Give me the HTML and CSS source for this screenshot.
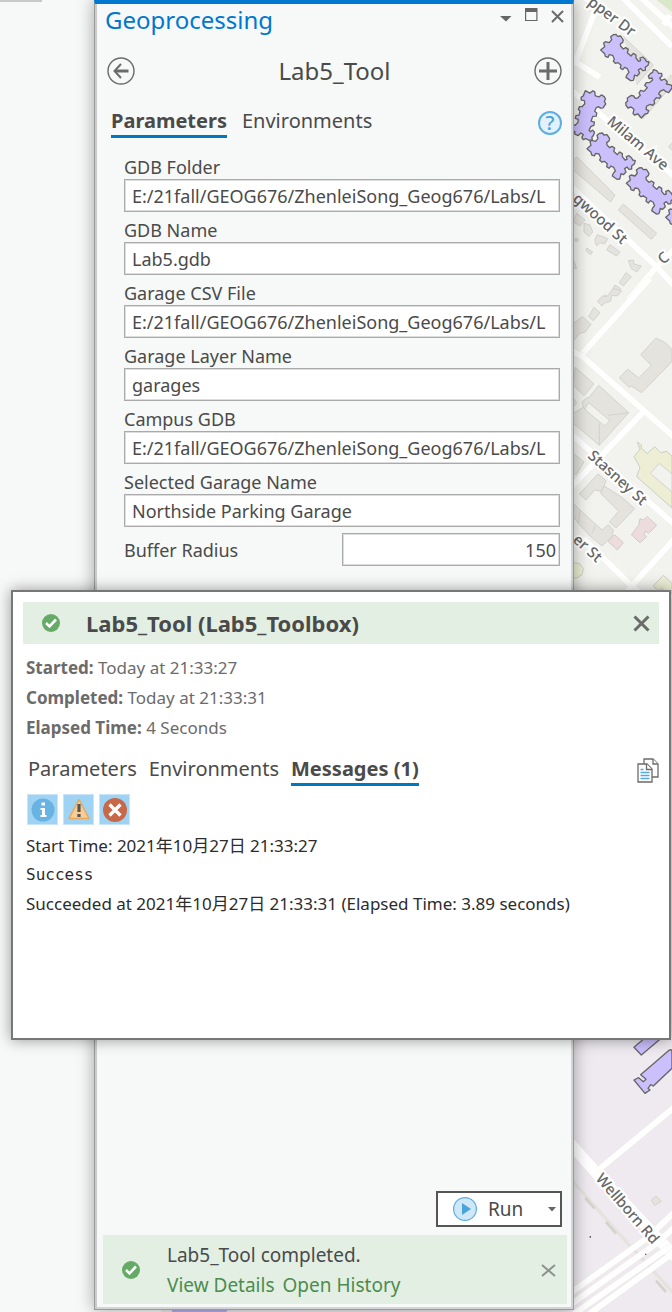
FILE: index.html
```html
<!DOCTYPE html>
<html lang="en">
<head>
<meta charset="utf-8">
<meta name="viewport" content="width=device-width, initial-scale=1">
<title>Geoprocessing</title>
<link rel="stylesheet" href="styles.css">
</head>
<body>
<div class="workspace">
  <svg class="map" viewBox="0 0 672 1312" preserveAspectRatio="xMinYMin slice" aria-label="Campus map">
    <defs>
      <path id="hall" d="M122 150L134 140 131 129 136 125 148 128 155 119 152 110 160 104 168 103 173 109 182 108 190 120 188 127 181 132 182 139 190 147 197 143 205 148 202 158 213 168 220 160 228 165 228 174 236 184 242 182 240 174 248 171 256 178 259 184 267 186 264 196 256 202 256 211 248 212 242 205 235 210 239 220 231 228 224 225 222 234 220 241 212 242 198 232 201 224 207 217 202 206 194 202 188 209 181 204 183 195 174 188 166 190 160 184 163 177 158 166 148 164 144 172 136 169 134 161Z"/>
    </defs>
    <rect class="land" width="672" height="1312"/>
    <g transform="translate(560 0) scale(.33333)">
      <path class="park" d="M290 0H336V36Z"/>
      <g class="roads"><path d="M185-10L336 140M240-10L350 90M330 45L310 75M45 190L110 20 60-20M40 182L120 232M-10 230L45 280 345 530M35 560L150 670 290 800 345 860M345 745L290 800 205 900"/></g>
      <path class="block" d="M190 110L280 195 230 255M330 225L350 240 250 355 235 350M40 480L50 470 165 585 152 606 40 510ZM190 612L290 700 274 718 175 630ZM336 430L325 440 336 450"/>
      <path class="block" d="M50 640L75 660 60 678 40 665ZM72 670L90 675 98 696 86 710 72 695ZM112 704L143 716 134 732 120 728 110 738 104 720ZM150 734L180 756 170 768 140 750ZM80 744L98 756 92 764 78 752ZM40 780L50 805H40ZM205 782L220 780 222 792 244 798 230 816 214 806ZM198 818L214 830 190 858 178 848ZM165 855L182 866 160 886 150 880ZM120 900L135 884 150 900ZM45 720a4 4 0 1 0 10 0a4 4 0 1 0-10 0"/>
      <g class="halls">
        <use href="#hall"/>
        <use href="#hall" transform="translate(73 111) rotate(-90 193 172)"/>
        <use href="#hall" transform="translate(-111 174) rotate(68 193 172)"/>
        <use href="#hall" transform="translate(-41 296)"/>
        <use href="#hall" transform="translate(77 400)"/>
        <use href="#hall" transform="translate(195 502)"/>
      </g>
    </g>
    <g transform="translate(560 290) scale(.33333)">
      <g class="roads"><path d="M270-35L68 190M30 180L68 200 350 448M30 430L180 560 345 705M248 368L35 590M70 745L215 888 345 745M215 888L190 920M215 888L250 920"/></g>
      <path class="block" d="M68 80L93 103 76 126 60 130 40 152V100ZM102 52L120 68 100 92 86 80ZM112 34L128 18 140 20 160-4 185 2 172 18 155 16 152 34 132 40 126 48ZM288 144L316 158 336 178V215L245 308 214 288 208 292 178 264 203 237 236 264 274 226 242 194ZM46 232L102 282 72 317 40 286ZM116 286L206 368 118 466 40 400V370L70 352 66 336 80 324 88 322ZM40 325L50 338 40 350ZM40 490L72 516 50 552H40Z"/>
      <path class="block" d="M114 552L138 572 132 588 122 604 104 600 78 630 58 612ZM132 588L186 622 224 656 168 714 148 696 176 664 122 610ZM40 640L60 660 126 720 145 704 160 720 156 740 126 768 90 738 55 700 40 680Z"/>
      <path class="court" d="M86 338L150 392 134 408 74 358Z"/>
      <path class="crease" d="M144 376L206 368M118 400V466M70 352L78 360M60 660L55 700M106 704L98 728"/>
      <path class="yellow" d="M232 456L245 466 243 474 262 490 284 470 302 488 320 484 336 498V654L230 560 240 532 222 500 240 478ZM40 818L58 820 70 836 66 854 50 864H40ZM310 856L336 880V910H322L305 894 296 904 280 888Z"/>
      <path class="court" d="M336 552L298 520 271 550 336 606Z"/>
      <path class="pink" d="M240 686L250 690 262 680 290 706 266 730 256 724 252 734 260 740 240 758 214 734 236 706ZM164 734L190 758 172 780 144 754Z"/>
    </g>
    <path class="campus" d="M0 1000H672V1312H0Z"/>
    <g transform="translate(560 1030) scale(.33333)">
      <g class="track"><path d="M35 450L190 625 350 800"/></g>
      <path class="ties" d="M76 504L104 536M138 576L168 610M288 752L318 786"/>
      <g class="roads wide"><path d="M30 340L110 430 345 680"/></g>
      <g class="roads"><path d="M345 230L115 420M30 790L260 625 345 545M30 825L290 640 345 590M30 860L330 650M90 850L345 665"/></g>
      <g class="halls"><path d="M222 52L250 28H300L244 75ZM336 60V115L280 168 272 164 264 175 270 180 255 190 222 150 236 143 250 155 258 148 242 134 328 60Z"/></g>
      <path class="block" d="M288 498L304 514 284 526 274 510Z"/>
      <path class="speck" d="M89 618H93V623H89ZM255 671H259V675H255Z"/>
    </g>
    <path class="hallstrip" d="M172 1309H229L226 1312H172Z"/>
    <path class="gutter" d="M0 0H95V1309H161V1312H0Z"/>
    <path class="edge" d="M0 1H42"/>
    <g class="street">
      <text transform="translate(587 4) rotate(37)">pper Dr</text>
      <text transform="translate(606 123) rotate(40)">Milam Ave</text>
      <text transform="translate(572 200) rotate(42)">gwood St</text>
      <text transform="translate(587 457) rotate(42)">Stasney St</text>
      <text transform="translate(572 541) rotate(42)">er St</text>
      <text transform="translate(595 1179) rotate(49)">Wellborn Rd</text>
      <text transform="translate(663 265) rotate(-40)">C</text>
    </g>
  </svg>

  <main class="pane">
    <header class="pane-bar">
      <h1>Geoprocessing</h1>
      <div class="window-tools">
        <button class="plain" aria-label="Options"><svg width="12" height="12" viewBox="0 0 12 12"><path class="solid" d="M0 5H11.500L6 10.500Z"/></svg></button>
        <button class="plain" aria-label="Maximize"><svg width="13" height="18" viewBox="0 0 13 18"><path class="solid" fill-rule="evenodd" d="M0 0H12.500V13H0ZM1.200 4V12H11.300V4Z"/></svg></button>
        <button class="plain" aria-label="Close pane"><svg width="13" height="13" viewBox="0 0 13 13"><path class="stroke" d="M1 1L12 12M12 1L1 12"/></svg></button>
      </div>
    </header>
    <div class="tool-head">
      <button class="plain" aria-label="Back"><svg width="28" height="28" viewBox="0 0 28 28"><circle class="ring" cx="14" cy="14" r="13"/><path class="thick" d="M21.500 14H8"/><path class="stroke" d="M14 7L7.500 14 14 21"/></svg></button>
      <h2>Lab5_Tool</h2>
      <button class="plain" aria-label="Add"><svg width="28" height="28" viewBox="0 0 28 28"><circle class="ring" cx="14" cy="14" r="13"/><path class="thick" d="M14 5V23M5 14H23"/></svg></button>
    </div>
    <div class="pane-tabs">
      <nav class="tabs">
        <button class="tab active">Parameters</button>
        <button class="tab">Environments</button>
      </nav>
      <button class="help" aria-label="Help">?</button>
    </div>
    <form class="fields">
      <div class="field"><label for="folder">GDB Folder</label><input id="folder" value="E:/21fall/GEOG676/ZhenleiSong_Geog676/Labs/L"></div>
      <div class="field"><label for="gdb">GDB Name</label><input id="gdb" value="Lab5.gdb"></div>
      <div class="field"><label for="csv">Garage CSV File</label><input id="csv" value="E:/21fall/GEOG676/ZhenleiSong_Geog676/Labs/L"></div>
      <div class="field"><label for="layer">Garage Layer Name</label><input id="layer" value="garages"></div>
      <div class="field"><label for="campus">Campus GDB</label><input id="campus" value="E:/21fall/GEOG676/ZhenleiSong_Geog676/Labs/L"></div>
      <div class="field"><label for="garage">Selected Garage Name</label><input id="garage" value="Northside Parking Garage"></div>
      <div class="field inline"><label for="radius">Buffer Radius</label><input id="radius" value="150"></div>
    </form>
    <div class="actions">
      <button class="run">
        <svg width="24" height="24" viewBox="0 0 24 24"><circle cx="12" cy="12" r="11.400" fill="#cfe7f7" stroke="#5eaee0" stroke-width="1.200"/><path d="M9 6V18L18 12Z" fill="#4ba3dc"/></svg>
        <span>Run</span>
        <svg class="caret" width="8" height="5" viewBox="0 0 8 5"><path class="solid" d="M0 0H8L4 4.500Z"/></svg>
      </button>
    </div>
    <footer class="status">
      <svg width="18" height="18" viewBox="0 0 18 18"><circle cx="9" cy="9" r="9" fill="#65aa66"/><path class="tick" d="M4 9L7.500 12.500 14 5.500"/></svg>
      <div class="status-text">
        <p>Lab5_Tool completed.</p>
        <p class="links"><a href="#details">View Details</a><a href="#history">Open History</a></p>
      </div>
      <button class="plain faint" aria-label="Dismiss"><svg width="15" height="13" viewBox="0 0 15 13"><path class="stroke" d="M1 1L14 12M14 1L1 12"/></svg></button>
    </footer>
  </main>

  <section class="popup" id="details">
    <header class="popup-head">
      <svg width="18" height="18" viewBox="0 0 18 18"><circle cx="9" cy="9" r="9" fill="#65aa66"/><path class="tick" d="M4 9L7.500 12.500 14 5.500"/></svg>
      <h2>Lab5_Tool (Lab5_Toolbox)</h2>
      <button class="plain" aria-label="Close"><svg width="17" height="17" viewBox="0 0 17 17"><path class="thick" d="M1.500 1.500L15.500 15.500M15.500 1.500L1.500 15.500"/></svg></button>
    </header>
    <div class="summary">
      <p><b>Started:</b> Today at 21:33:27</p>
      <p><b>Completed:</b> Today at 21:33:31</p>
      <p><b>Elapsed Time:</b> 4 Seconds</p>
    </div>
    <div class="popup-tabs">
      <nav class="tabs compact">
        <button class="tab">Parameters</button>
        <button class="tab">Environments</button>
        <button class="tab active">Messages (1)</button>
      </nav>
      <button class="plain" aria-label="Copy messages"><svg width="22" height="25" viewBox="0 0 22 25"><g fill="#fff" stroke="#6b6b6b" stroke-width="1.300"><path d="M7 1H16L21 6V19H7Z"/><path d="M16 1V6H21M1 6H10L15 11V24H1Z"/><path d="M9.500 6V11.500H15"/></g><path d="M3.500 11.500H6.500M3.500 14.500H12.500M3.500 17.500H12.500M3.500 20.500H12.500" stroke="#55a9dd" stroke-width="1.300"/></svg></button>
    </div>
    <div class="filters">
      <button class="filter" aria-label="Information"><svg width="24" height="24" viewBox="0 0 24 24"><circle cx="12" cy="12" r="11.500" fill="#69b3e3"/><path d="M10.500 4.500H14V7.500H10.500ZM9.500 10H14V17H15.500V19H9.500V17H11V12H9.500Z" fill="#fff"/></svg></button>
      <button class="filter" aria-label="Warnings"><svg width="24" height="24" viewBox="0 0 24 24"><path d="M12 1.500L22 20.500H2Z" fill="#f9cd94" stroke="#e5a95f" stroke-width="1.500" stroke-linejoin="round"/><path d="M10.400 6H13.600V14H10.400ZM10.400 16H13.600V19H10.400Z" fill="#555"/></svg></button>
      <button class="filter" aria-label="Errors"><svg width="24" height="24" viewBox="0 0 24 24"><circle cx="12" cy="12" r="12" fill="#c86848"/><path d="M6.500 6.500L17.500 17.500M17.500 6.500L6.500 17.500" stroke="#fff" stroke-width="3.200"/></svg></button>
    </div>
    <div class="log">
      <p>Start Time: 2021年10月27日 21:33:27</p>
      <p class="output">Success</p>
      <p>Succeeded at 2021年10月27日 21:33:31 (Elapsed Time: 3.89 seconds)</p>
    </div>
  </section>
</div>
</body>
</html>
```

FILE: styles.css
```css
* { box-sizing: border-box; }
body, h1, h2, p { margin: 0; }
body {
  font-family: "Noto Sans", "Noto Sans CJK SC", sans-serif;
  font-size: 18px;
  line-height: 24px;
  color: #4a4a4a;
  background: #f7f8f8;
}
button, input { font: inherit; color: inherit; }
button { padding: 0; border: 0; background: none; }
svg { display: block; flex: none; }
.workspace { position: relative; display: flex; min-height: 100vh; overflow: hidden; }
.solid { fill: #666; }
.stroke { fill: none; stroke: #6b6b6b; stroke-width: 2; }
.thick { fill: none; stroke: #6b6b6b; stroke-width: 3; }
.ring { fill: none; stroke: #6b6b6b; stroke-width: 1.4; }
.tick { fill: none; stroke: #fff; stroke-width: 2.6; }

/* Map backdrop */
.map { position: absolute; inset: 0; width: 100%; height: 100%; }
.land { fill: #f2f3ee; }
.park { fill: #d9e8c8; }
.campus { fill: #eeeaf0; }
.roads { fill: none; stroke: #fff; stroke-width: 18; filter: drop-shadow(0 0 1px #dfdfc8); }
.wide { stroke-width: 34; }
.block { fill: #e4e3dd; stroke: #d2d2cf; stroke-width: 3; }
.court { fill: #f2f3ee; stroke: #d2d2cf; stroke-width: 3; }
.crease { fill: none; stroke: #d2d2cf; stroke-width: 3; }
.yellow { fill: #edeed4; stroke: #cccdc5; stroke-width: 3; }
.pink { fill: #eddcde; stroke: #d3c9ca; stroke-width: 3; }
.halls { fill: #cbbffc; stroke: #666; stroke-width: 4; stroke-linejoin: round; }
.track { fill: none; stroke: #e4e3de; stroke-width: 10; }
.ties { fill: none; stroke: #d4d3ce; stroke-width: 8; }
.speck { fill: #555; }
.hallstrip { fill: #b9aeea; }
.gutter { fill: #f7f9f8; }
.edge { stroke: #c9c9c9; stroke-width: 2; }
.street text {
  font-family: "Noto Sans", sans-serif;
  font-size: 15px;
  font-weight: 500;
  fill: #666;
  stroke: #fff;
  stroke-width: 4px;
  paint-order: stroke;
}

/* Tool pane */
.pane {
  position: relative;
  display: flex;
  flex-direction: column;
  flex: 1;
  margin: 0 98px 2px 94px;
  padding: 0 6px 5px;
  border: 1px solid #999;
  border-top: 4px solid #0078d0;
  background: #f7f9f8;
  box-shadow: inset 2px 0 #ccc, inset -2px -2px #d2d4d5, 0 0 16px rgba(0, 0, 0, .35);
}
.pane-bar { display: flex; justify-content: space-between; padding: 0 3px 0 4px; height: 34px; }
.pane-bar h1 { font-size: 24px; font-weight: 400; line-height: 32px; color: #0078d0; }
.window-tools { display: flex; align-items: center; gap: 13px; height: 25px; }
.tool-head { display: flex; align-items: center; justify-content: space-between; height: 66px; padding: 0 5px 0 6px; }
.tool-head h2 { font-size: 24px; font-weight: 400; line-height: 30px; }
.pane-tabs { display: flex; align-items: center; justify-content: space-between; padding: 3px 5px 0 10px; }
.tabs { display: flex; gap: 15px; }
.compact { gap: 12px; }
.tab { border-bottom: 3px solid transparent; font-size: 20px; line-height: 28px; white-space: nowrap; }
.tab.active { border-bottom-color: #0078c0; font-weight: 700; }
.help { width: 24px; height: 24px; border: 2px solid #5eaee0; border-radius: 50%; background: #e2f1fb; color: #4ba3dc; font-size: 20px; font-weight: 500; line-height: 20px; }
.fields { display: flex; flex-direction: column; gap: 6px; padding: 17px 7px 0 23px; }
.field { display: flex; flex-direction: column; }
.field label { height: 24px; }
.field input {
  width: 100%;
  height: 33px;
  padding: 0 2px 0 7px;
  border: 1px solid #aaa;
  border-radius: 0;
  outline: 0;
  background: #fff;
  box-shadow: inset 0 0 0 1px #ddd;
}
.inline { flex-direction: row; justify-content: space-between; align-items: center; }
.inline input { width: 50%; padding-right: 3px; text-align: right; }
.actions { display: flex; justify-content: flex-end; margin-top: auto; padding: 0 5px 8px; }
.run { display: flex; align-items: center; gap: 11px; width: 126px; height: 36px; padding: 0 4px 0 15px; border: 2px solid #555; background: #fff; font-size: 19px; }
.caret { margin-left: auto; }
.status { display: flex; align-items: center; padding: 5px 11px 4px 19px; margin-left: 2px; background: #e3efe3; }
.status-text { flex: 1; padding-left: 27px; font-size: 19px; line-height: 30px; }
.links { display: flex; gap: 8px; }
.links a { color: #4c8c4e; text-decoration: none; }
.faint { opacity: .7; }

/* Result popup */
.popup {
  position: absolute;
  top: 590px;
  left: 11px;
  right: 1px;
  min-height: 450px;
  padding: 10px;
  border: 2px solid #777;
  background: #fff;
  box-shadow: 0 0 14px rgba(0, 0, 0, .4);
}
.popup-head { display: flex; align-items: center; gap: 26px; padding: 0 9px 0 19px; height: 42px; background: #e3efe3; }
.popup-head h2 { flex: 1; font-size: 22px; line-height: 30px; }
.summary { padding: 9px 3px 0; font-size: 17px; line-height: 30px; color: #6b6b6b; }
.popup-tabs { display: flex; align-items: center; justify-content: space-between; padding: 12px 0 0 5px; }
.filters { display: flex; gap: 5px; padding: 8px 4px 0; }
.filter { display: grid; place-items: center; width: 31px; height: 31px; border: 1px solid #c9e5f7; background: #9fd3f3; }
.log { padding: 6px 3px 0; font-size: 17px; line-height: 29px; color: #2c2c2c; }
.log .output { font-family: "DejaVu Sans Mono", monospace; font-size: 16px; }
```
